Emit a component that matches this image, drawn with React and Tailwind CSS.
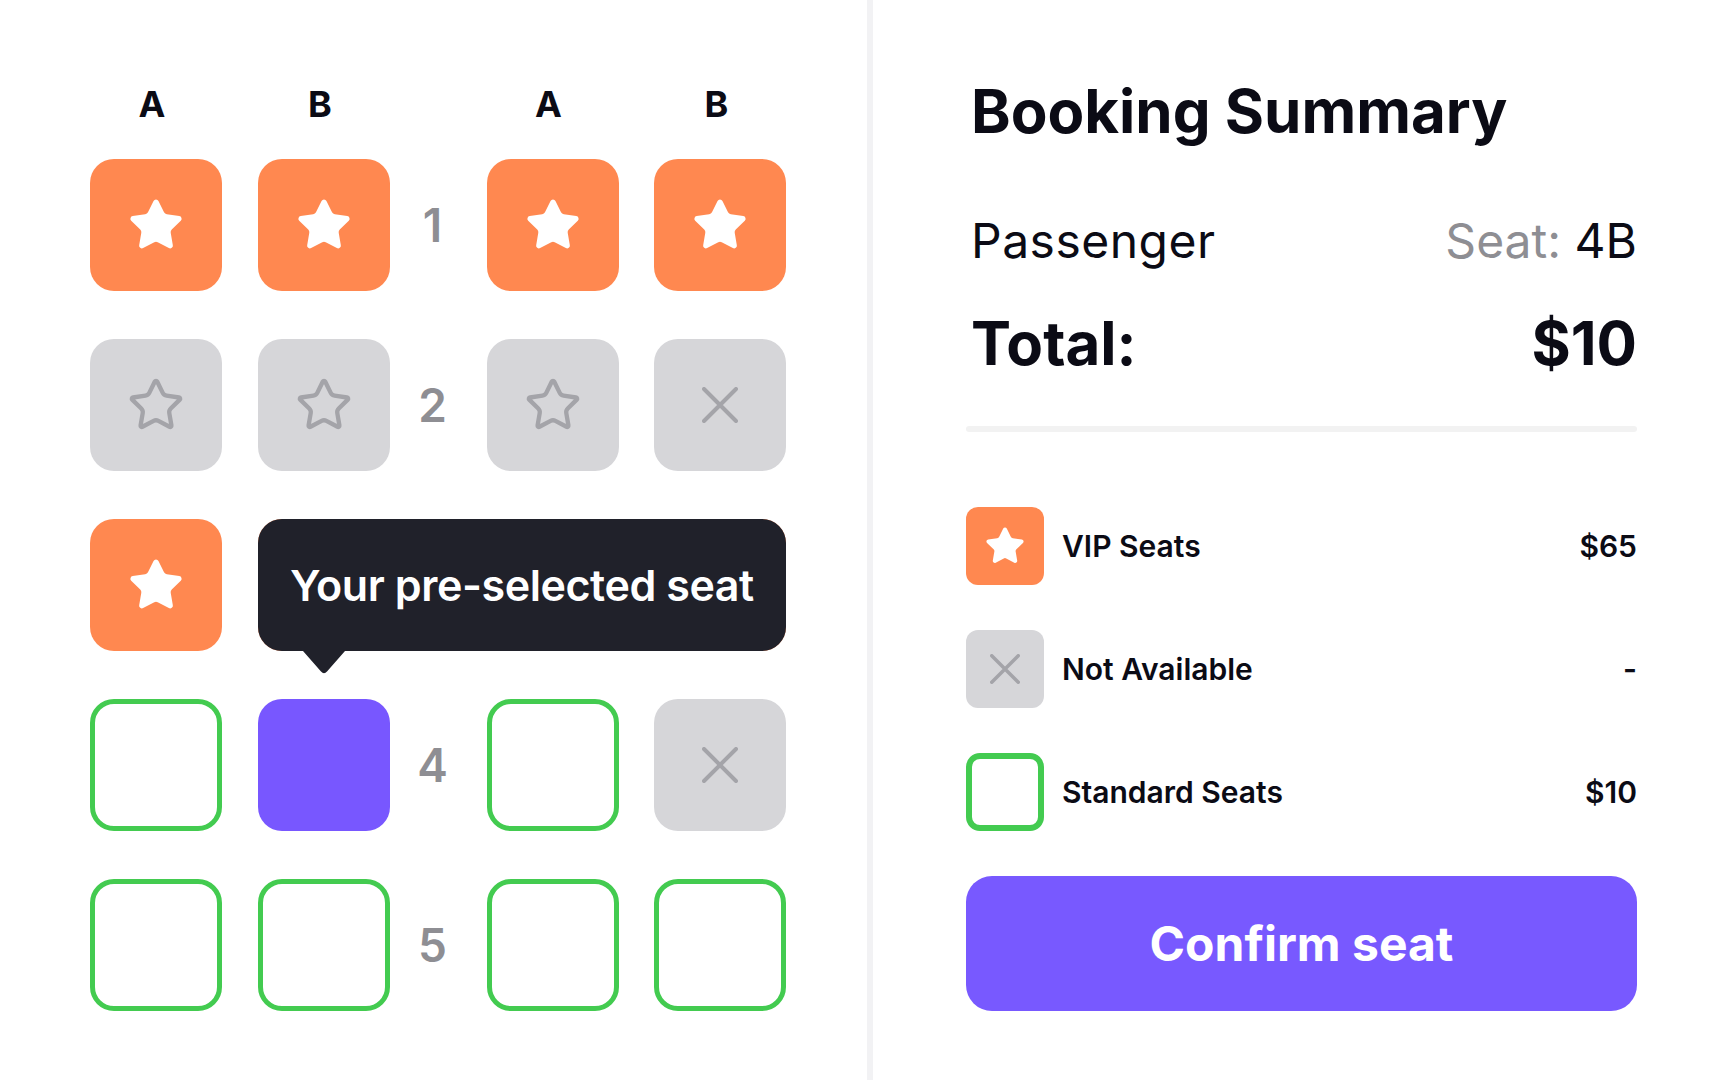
import React from 'react';

const rows = [
  { num: 1, left: ['vip', 'vip'], right: ['vip', 'vip'] },
  { num: 2, left: ['taken', 'taken'], right: ['taken', 'na'] },
  { num: 3, left: ['vip', 'vip'], right: ['vip', 'vip'], tooltip: true },
  { num: 4, left: ['std', 'selected'], right: ['std', 'na'] },
  { num: 5, left: ['std', 'std'], right: ['std', 'std'] },
];

const legend = [
  { kind: 'vip', label: 'VIP Seats', price: '$65' },
  { kind: 'na', label: 'Not Available', price: '-' },
  { kind: 'std', label: 'Standard Seats', price: '$10' },
];

const STAR =
  'M11.525 2.295a.53.53 0 0 1 .95 0l2.31 4.679a2.123 2.123 0 0 0 1.595 1.16l5.166.756a.53.53 0 0 1 .294.904l-3.736 3.638a2.123 2.123 0 0 0-.611 1.878l.882 5.14a.53.53 0 0 1-.771.56l-4.618-2.428a2.122 2.122 0 0 0-1.973 0L6.396 21.01a.53.53 0 0 1-.77-.56l.881-5.139a2.122 2.122 0 0 0-.611-1.879L2.16 9.795a.53.53 0 0 1 .294-.906l5.165-.755a2.122 2.122 0 0 0 1.597-1.16z';

function Star({ size, filled, strokeWidth }) {
  return (
    <svg
      width={size}
      height={size}
      viewBox="0 0 24 24"
      fill={filled ? '#ffffff' : 'none'}
      stroke={filled ? '#ffffff' : '#a4a4a9'}
      strokeWidth={strokeWidth}
      strokeLinejoin="round"
      strokeLinecap="round"
    >
      <path d={STAR} />
    </svg>
  );
}

function Cross({ size, stroke }) {
  const p = stroke / 2;
  return (
    <svg width={size} height={size} viewBox={`0 0 ${size} ${size}`} fill="none" stroke="#a4a4a9" strokeWidth={stroke} strokeLinecap="round">
      <path d={`M${p} ${p}L${size - p} ${size - p}M${size - p} ${p}L${p} ${size - p}`} />
    </svg>
  );
}

function Seat({ kind }) {
  if (kind === 'vip') {
    return (
      <div className="w-[132px] h-[132px] rounded-3xl bg-[#ff8850] flex items-center justify-center">
        <Star size={58} filled strokeWidth={1.2} />
      </div>
    );
  }
  if (kind === 'taken') {
    return (
      <div className="w-[132px] h-[132px] rounded-3xl bg-[#d6d6d9] flex items-center justify-center">
        <Star size={58} strokeWidth={1.8} />
      </div>
    );
  }
  if (kind === 'na') {
    return (
      <div className="w-[132px] h-[132px] rounded-3xl bg-[#d6d6d9] flex items-center justify-center">
        <Cross size={36} stroke={4} />
      </div>
    );
  }
  if (kind === 'selected') {
    return <div className="w-[132px] h-[132px] rounded-3xl bg-[#7857ff]" />;
  }
  return <div className="w-[132px] h-[132px] rounded-3xl border-[5px] border-[#43cb50] bg-white" />;
}

function LegendIcon({ kind }) {
  if (kind === 'vip') {
    return (
      <div className="w-[78px] h-[78px] rounded-xl bg-[#ff8850] flex items-center justify-center">
        <Star size={42} filled strokeWidth={1.2} />
      </div>
    );
  }
  if (kind === 'na') {
    return (
      <div className="w-[78px] h-[78px] rounded-xl bg-[#d6d6d9] flex items-center justify-center">
        <Cross size={30} stroke={3.5} />
      </div>
    );
  }
  return <div className="w-[78px] h-[78px] rounded-[14px] border-[6px] border-[#43cb50] bg-white" />;
}

function Tooltip() {
  return (
    <div className="absolute left-[168px] top-0 z-10 w-[528px] h-[132px] rounded-3xl bg-[#20212a] flex items-center justify-center">
      <span className="text-white text-[43px] font-semibold leading-none tracking-[-0.01em]">Your pre-selected seat</span>
      <svg className="absolute left-[45px] top-full" width="42" height="23" viewBox="0 0 42 23" fill="#20212a">
        <path d="M0 0H42L24 20.5Q21 24 18 20.5Z" />
      </svg>
    </div>
  );
}

export default function App() {
  return (
    <div className="w-[1728px] h-[1080px] bg-white flex font-['Inter',sans-serif] text-[#0b0b15] overflow-hidden">
      <div className="w-[867px] shrink-0 pl-[90px] pt-[86px]">
        <div className="flex items-center h-[36px] mb-[37px] text-[36px] font-bold leading-none">
          <div className="flex gap-[36px]">
            <div className="w-[132px] text-center pr-2">A</div>
            <div className="w-[132px] text-center pr-2">B</div>
          </div>
          <div className="w-[97px]" />
          <div className="flex gap-[35px]">
            <div className="w-[132px] text-center pr-[9px]">A</div>
            <div className="w-[132px] text-center pr-[7px]">B</div>
          </div>
        </div>

        <div className="flex flex-col gap-[48px]">
          {rows.map((r) => (
            <div key={r.num} className="relative flex items-center">
              <div className="flex gap-[36px]">
                {r.left.map((k, i) => (
                  <Seat key={i} kind={k} />
                ))}
              </div>
              <div className="w-[97px] pr-[12px] text-center text-[46px] font-semibold leading-none text-[#8e8e93]">
                {r.tooltip ? '' : r.num}
              </div>
              <div className="flex gap-[35px]">
                {r.right.map((k, i) => (
                  <Seat key={i} kind={k} />
                ))}
              </div>
              {r.tooltip && <Tooltip />}
            </div>
          ))}
        </div>
      </div>

      <div className="w-[6px] shrink-0 bg-[#f2f2f4]" />

      <div className="flex-1 pl-[93px] pt-[81px]">
        <div className="w-[671px] flex flex-col">
          <h1 className="text-[60px] font-bold leading-none pl-[5px]">Booking Summary</h1>

          <div className="mt-[76px] flex justify-between items-center text-[48px] leading-none pl-[5px]">
            <span className="tracking-[0.01em]">Passenger</span>
            <span>
              <span className="text-[#8e8e93]">Seat:</span> 4B
            </span>
          </div>

          <div className="mt-[48px] flex justify-between items-center text-[60px] font-bold leading-none pl-[5px]">
            <span>Total:</span>
            <span>$10</span>
          </div>

          <div className="mt-[53px] h-[6px] rounded-full bg-[#f2f2f2]" />

          <div className="mt-[75px] flex flex-col gap-[45px]">
            {legend.map((l) => (
              <div key={l.label} className="flex items-center h-[78px]">
                <LegendIcon kind={l.kind} />
                <span className="ml-[18px] text-[30px] font-semibold leading-none">{l.label}</span>
                <span className="ml-auto text-[30px] font-semibold leading-none">{l.price}</span>
              </div>
            ))}
          </div>

          <button className="mt-[45px] h-[135px] rounded-[26px] bg-[#7859ff] text-white text-[48px] font-bold leading-none flex items-center justify-center">
            Confirm seat
          </button>
        </div>
      </div>
    </div>
  );
}
